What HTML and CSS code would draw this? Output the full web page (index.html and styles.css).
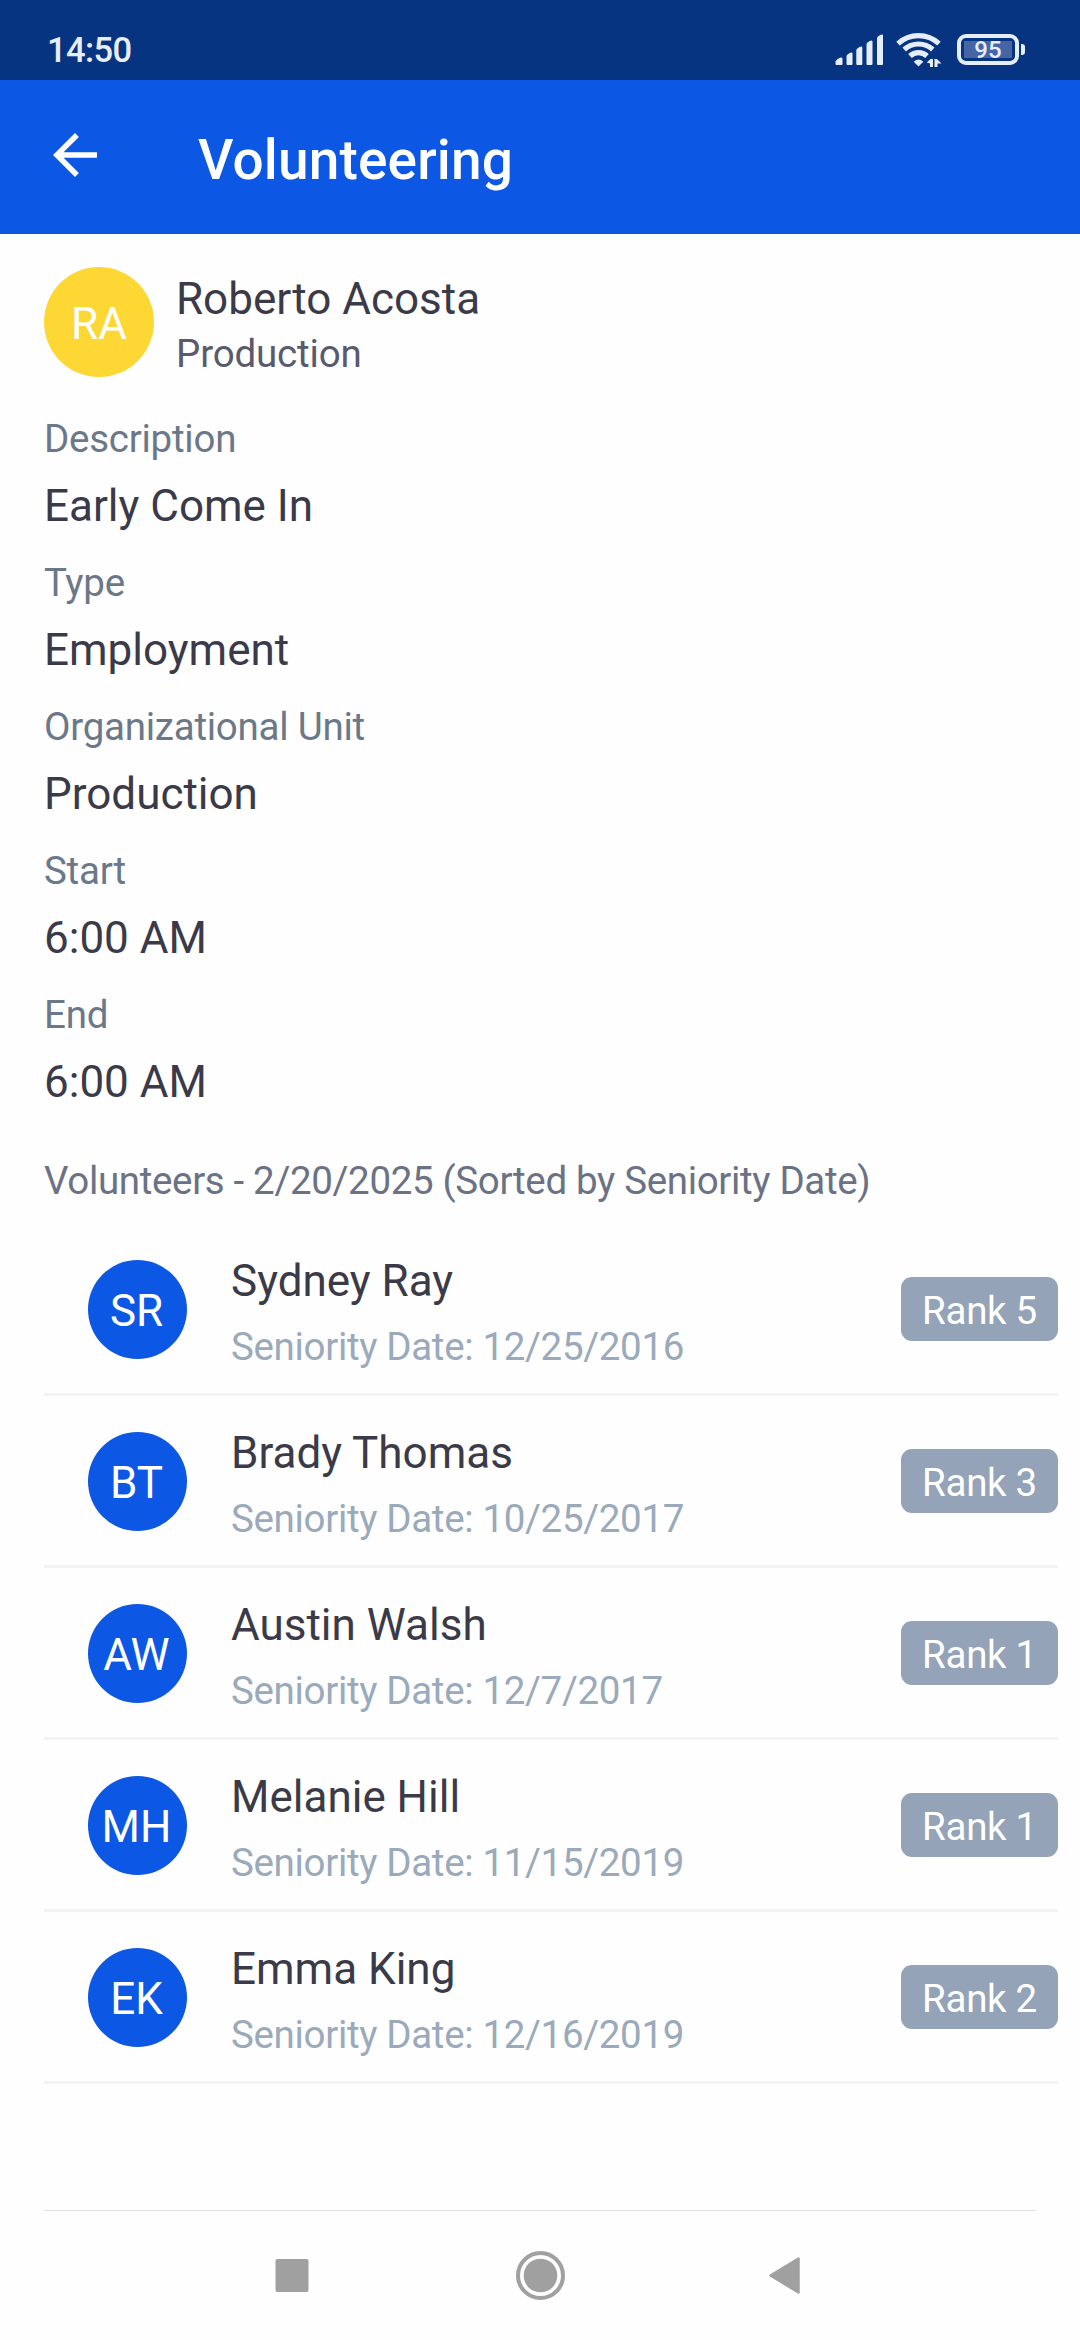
FILE: index.html
```html
<!DOCTYPE html>
<html lang="en">
<head>
<meta charset="utf-8">
<title>Volunteering</title>
<link rel="stylesheet" href="styles.css">
</head>
<body>
<div class="screen">
  <header class="status-bar">
    <span class="clock">14:50</span>
    <div class="status-icons">
      <svg class="signal" width="50" height="34" viewBox="0 0 50 34" fill="#e6edfb">
        <path d="M0.500 33V30.500q1-2.500 5-4q2-.3 2 1.200V33q0 1-1 1h-5q-1 0-1-1z"/>
        <path d="M11.500 33V25q1-2.500 5-3.500q1 0 1 1V33q0 1-1 1h-4q-1 0-1-1z"/>
        <path d="M21.300 33V19q1-2.500 5-3.500q1 0 1 1V33q0 1-1 1h-4q-1 0-1-1z"/>
        <path d="M31.500 33V13q1-2.500 5-3.500q1 0 1 1V33q0 1-1 1h-4q-1 0-1-1z"/>
        <path d="M42 33V7q1-2.500 5-3.500q1 0 1 1V33q0 1-1 1h-4q-1 0-1-1z"/>
      </svg>
      <svg class="wifi" width="48" height="37" viewBox="0 0 48 37" fill="none" stroke="#e6edfb" stroke-width="5.200">
        <path d="M3 12.600a30.300 30.300 0 0 1 41 0"/>
        <path d="M9.200 18.500a21.300 21.300 0 0 1 28.600 0"/>
        <path d="M15 25a12.300 12.300 0 0 1 17 0"/>
        <path d="M18.700 30.800q4.800-4.600 9.600 0L23.500 35.500z" fill="#e6edfb" stroke="none"/>
        <path d="M31.800 31.500L35.500 28H38V36H35V32.500zM39.500 36V28h2.500l4.500 4.500h-4V36z" fill="#e6edfb" stroke="none"/>
      </svg>
      <div class="battery"><div class="battery-level">95</div></div>
      <div class="battery-tip"></div>
    </div>
  </header>

  <nav class="app-bar">
    <svg class="back" width="66" height="66" viewBox="0 0 24 24" fill="#fff"><path d="M20 11H7.830l5.590-5.590L12 4l-8 8 8 8 1.410-1.410L7.830 13H20v-2z"/></svg>
    <h1 class="title">Volunteering</h1>
  </nav>

  <main class="content">
    <section class="person">
      <div class="avatar avatar-main">RA</div>
      <div class="person-text">
        <div class="person-name">Roberto Acosta</div>
        <div class="person-unit">Production</div>
      </div>
    </section>

    <dl class="details">
      <dt>Description</dt><dd>Early Come In</dd>
      <dt>Type</dt><dd>Employment</dd>
      <dt>Organizational Unit</dt><dd>Production</dd>
      <dt>Start</dt><dd>6:00 AM</dd>
      <dt>End</dt><dd>6:00 AM</dd>
    </dl>

    <h2 class="list-title">Volunteers - 2/20/2025 (Sorted by Seniority Date)</h2>
    <ul class="volunteers">
      <li class="row"><div class="avatar">SR</div><div class="row-text"><div class="name">Sydney Ray</div><div class="date">Seniority Date: 12/25/2016</div></div><span class="rank">Rank 5</span></li>
      <li class="row"><div class="avatar">BT</div><div class="row-text"><div class="name">Brady Thomas</div><div class="date">Seniority Date: 10/25/2017</div></div><span class="rank">Rank 3</span></li>
      <li class="row"><div class="avatar">AW</div><div class="row-text"><div class="name">Austin Walsh</div><div class="date">Seniority Date: 12/7/2017</div></div><span class="rank">Rank 1</span></li>
      <li class="row"><div class="avatar">MH</div><div class="row-text"><div class="name">Melanie Hill</div><div class="date">Seniority Date: 11/15/2019</div></div><span class="rank">Rank 1</span></li>
      <li class="row"><div class="avatar">EK</div><div class="row-text"><div class="name">Emma King</div><div class="date">Seniority Date: 12/16/2019</div></div><span class="rank">Rank 2</span></li>
    </ul>
  </main>

  <footer class="system-nav">
    <svg width="50" height="50" viewBox="0 0 50 50"><rect x="8.500" y="8" width="33" height="33" rx="2" fill="#a0a0a0"/></svg>
    <svg width="50" height="50" viewBox="0 0 50 50"><circle cx="24.500" cy="24.500" r="22.500" fill="none" stroke="#a0a0a0" stroke-width="4"/><circle cx="24.500" cy="24.500" r="16.800" fill="#a0a0a0"/></svg>
    <svg width="50" height="50" viewBox="0 0 50 50"><path d="M5.500 24.500L33.500 7.500V41.500z" fill="#a0a0a0" stroke="#a0a0a0" stroke-width="2.500" stroke-linejoin="round"/></svg>
  </footer>
</div>
</body>
</html>
```
FILE: styles.css
```css
* { box-sizing: border-box; margin: 0; padding: 0; }

body {
  font-family: Roboto, "Liberation Sans", sans-serif;
  font-size: 44px;
  color: #3b3a48;
  background: #fefefe;
}

.screen {
  width: 1080px;
  height: 2340px;
  display: flex;
  flex-direction: column;
  overflow: hidden;
}

.status-bar {
  height: 80px;
  flex: none;
  display: flex;
  justify-content: space-between;
  padding: 30px 55px 0 47px;
  background: #063480;
  color: #e6edfb;
}
.clock { font-size: 34.5px; line-height: 41px; font-weight: 500; letter-spacing: -0.6px; }
.status-icons { display: flex; align-items: flex-start; }
.signal { margin-top: 1px; }
.wifi { margin: 1px 0 0 10px; }
.battery {
  width: 62px;
  height: 31px;
  margin: 4px 0 0 14px;
  border: 4px solid #e6edfb;
  border-radius: 9px;
  padding: 3px;
}
.battery-level {
  height: 17px;
  background: #4565a5;
  font-size: 24px;
  line-height: 18px;
  font-weight: 500;
  text-align: center;
}
.battery-tip {
  width: 4px;
  height: 11px;
  margin: 14px 0 0 2px;
  border-radius: 0 3px 3px 0;
  background: #e6edfb;
}

.app-bar {
  height: 154px;
  flex: none;
  display: flex;
  background: #0c57e3;
  color: #fff;
  padding: 42px 42px 0;
}
.title { margin-left: 90px; padding-top: 6px; font-size: 55px; line-height: 64px; font-weight: 500; letter-spacing: 0.15px; }

.content { flex: 1; padding: 33px 22px 0 44px; }

.avatar {
  width: 99px;
  height: 99px;
  flex: none;
  border-radius: 50%;
  background: #0c57e3;
  color: #fff;
  line-height: 102px;
  text-align: center;
  padding-right: 2px;
}
.avatar-main { width: 110px; height: 110px; line-height: 114px; padding-right: 0; background: #fdd835; }

.person { display: flex; gap: 22px; height: 110px; }
.person-name { line-height: 52px; padding-top: 6px; }
.person-unit { font-size: 38.5px; line-height: 58px; letter-spacing: -0.15px; color: #5a5a6e; }

.details { padding-top: 39px; }
.details dt { font-size: 38.5px; line-height: 46px; letter-spacing: -0.25px; color: #6b7889; }
.details dd { line-height: 52px; padding-top: 18px; margin-bottom: 28px; }

.list-title {
  padding-top: 22px;
  font-size: 38.5px;
  line-height: 46px;
  font-weight: 400;
  letter-spacing: -0.34px;
  color: #6b7285;
}

.volunteers { list-style: none; padding-top: 20px; }
.row {
  height: 172px;
  display: flex;
  align-items: center;
  padding: 2px 0 0 44px;
  border-bottom: 3px solid #f1f3f7;
}
.row-text { flex: 1; margin-left: 44px; padding-top: 8px; }
.name { line-height: 52px; }
.date { margin-top: 14px; font-size: 38.5px; line-height: 52px; letter-spacing: -0.33px; color: #9aaaba; }
.rank {
  width: 157px;
  height: 64px;
  margin-bottom: 1px;
  border-radius: 11px;
  background: #94a3b8;
  color: #fff;
  font-size: 38.5px;
  line-height: 67px;
  letter-spacing: -0.3px;
  text-align: center;
}

.system-nav {
  height: 130px;
  flex: none;
  margin: 0 44px;
  padding: 40px 0 0 223px;
  border-top: 1px solid #e0e0e0;
  display: flex;
  gap: 199px;
}
```
